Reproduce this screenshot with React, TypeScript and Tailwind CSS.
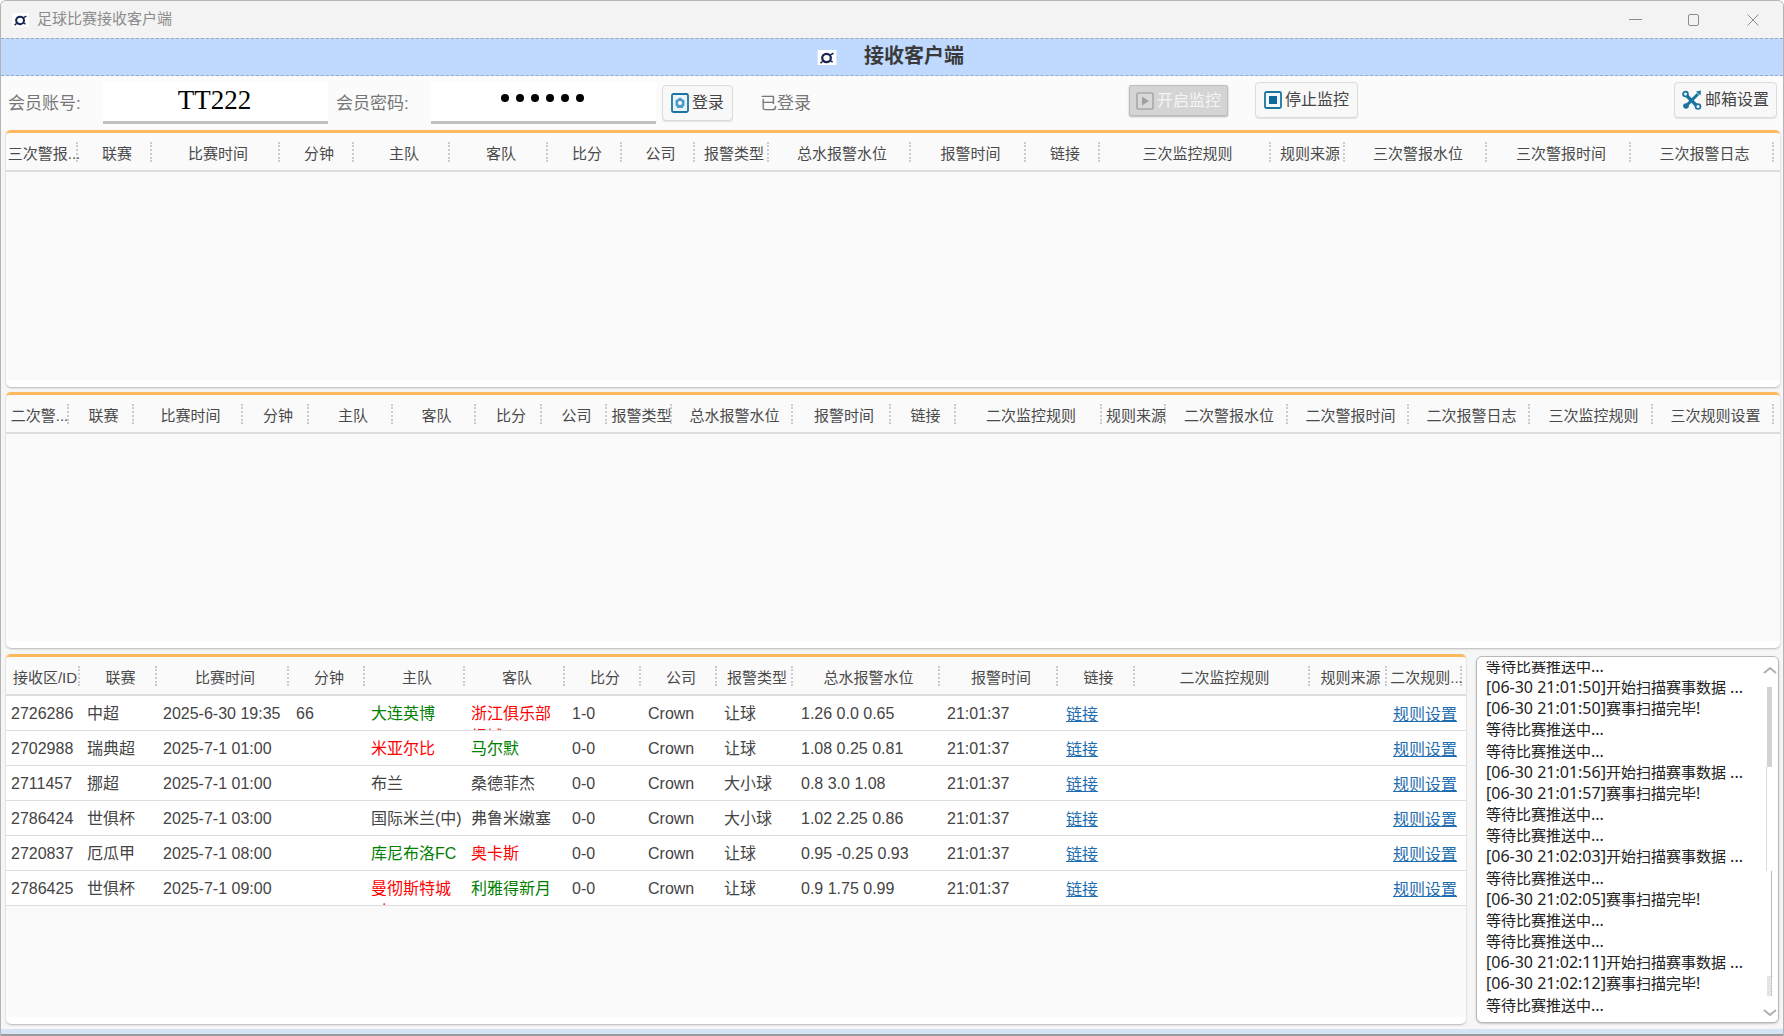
import React from "react";

type Cell = { text: string; color?: string };
type Match = {
  id: string;
  league: string;
  time: string;
  minute: string;
  home: Cell;
  away: Cell;
  score: string;
  type: string;
  water: string;
};

const GREEN = "text-[#008000]";
const RED = "text-[#ff0000]";
const PLAIN = "text-[#444444]";

const firstCols =
  "grid-cols-[72px_74px_128px_74px_96px_98px_74px_73px_74px_142px_115px_74px_171px_74px_142px_144px_143px]";
const secondCols =
  "grid-cols-[63px_65px_109px_66px_84px_83px_66px_65px_65px_121px_98px_65px_146px_64px_122px_121px_121px_123px_121px]";
const thirdCols =
  "grid-cols-[74px_77px_132px_76px_100px_100px_76px_76px_76px_147px_118px_77px_175px_77px_75px]";

const firstHead = ["三次警报...", "联赛", "比赛时间", "分钟", "主队", "客队", "比分", "公司", "报警类型", "总水报警水位", "报警时间", "链接", "三次监控规则", "规则来源", "三次警报水位", "三次警报时间", "三次报警日志"];
const secondHead = ["二次警...", "联赛", "比赛时间", "分钟", "主队", "客队", "比分", "公司", "报警类型", "总水报警水位", "报警时间", "链接", "二次监控规则", "规则来源", "二次警报水位", "二次警报时间", "二次报警日志", "三次监控规则", "三次规则设置"];
const thirdHead = ["接收区/ID", "联赛", "比赛时间", "分钟", "主队", "客队", "比分", "公司", "报警类型", "总水报警水位", "报警时间", "链接", "二次监控规则", "规则来源", "二次规则..."];

const matches: Match[] = [
  { id: "2726286", league: "中超", time: "2025-6-30 19:35", minute: "66", home: { text: "大连英博", color: GREEN }, away: { text: "浙江俱乐部绿城", color: RED }, score: "1-0", type: "让球", water: "1.26 0.0 0.65" },
  { id: "2702988", league: "瑞典超", time: "2025-7-1 01:00", minute: "", home: { text: "米亚尔比", color: RED }, away: { text: "马尔默", color: GREEN }, score: "0-0", type: "让球", water: "1.08 0.25 0.81" },
  { id: "2711457", league: "挪超", time: "2025-7-1 01:00", minute: "", home: { text: "布兰" }, away: { text: "桑德菲杰" }, score: "0-0", type: "大小球", water: "0.8 3.0 1.08" },
  { id: "2786424", league: "世俱杯", time: "2025-7-1 03:00", minute: "", home: { text: "国际米兰(中)" }, away: { text: "弗鲁米嫩塞" }, score: "0-0", type: "大小球", water: "1.02 2.25 0.86" },
  { id: "2720837", league: "厄瓜甲", time: "2025-7-1 08:00", minute: "", home: { text: "库尼布洛FC", color: GREEN }, away: { text: "奥卡斯", color: RED }, score: "0-0", type: "让球", water: "0.95 -0.25 0.93" },
  { id: "2786425", league: "世俱杯", time: "2025-7-1 09:00", minute: "", home: { text: "曼彻斯特城(中)", color: RED }, away: { text: "利雅得新月", color: GREEN }, score: "0-0", type: "让球", water: "0.9 1.75 0.99" },
];

const logLines = [
  "等待比赛推送中...",
  "[06-30 21:01:50]开始扫描赛事数据 ...",
  "[06-30 21:01:50]赛事扫描完毕!",
  "等待比赛推送中...",
  "等待比赛推送中...",
  "[06-30 21:01:56]开始扫描赛事数据 ...",
  "[06-30 21:01:57]赛事扫描完毕!",
  "等待比赛推送中...",
  "等待比赛推送中...",
  "[06-30 21:02:03]开始扫描赛事数据 ...",
  "等待比赛推送中...",
  "[06-30 21:02:05]赛事扫描完毕!",
  "等待比赛推送中...",
  "等待比赛推送中...",
  "[06-30 21:02:11]开始扫描赛事数据 ...",
  "[06-30 21:02:12]赛事扫描完毕!",
  "等待比赛推送中...",
];

const Logo = () => (
  <svg viewBox="0 0 20 16" className="h-full w-full">
    <rect width="20" height="16" fill="#fff" />
    <ellipse cx="9.5" cy="8.5" rx="4.6" ry="4.4" fill="none" stroke="#14264f" strokeWidth="2.4" />
    <path d="M5.5 12 L3 14 M13 5.5 L17 3.5 M13 11 L16 13" stroke="#14264f" strokeWidth="1.6" fill="none" />
  </svg>
);

const LoginIcon = () => (
  <svg viewBox="0 0 18 20" className="h-[20px] w-[18px] shrink-0">
    <rect x="1" y="1" width="16" height="18" rx="1.5" fill="#eaf3f8" stroke="#1a74a0" strokeWidth="1.8" />
    <path d="M9 4.5 L13.5 7.5 V12 L11.5 15 H6.5 L4.5 12 V7.5 Z" fill="#4a9cc6" />
    <circle cx="9" cy="10" r="2" fill="#fff" />
  </svg>
);

const PlayIcon = () => (
  <svg viewBox="0 0 18 18" className="h-[18px] w-[18px] shrink-0">
    <rect x="1" y="1" width="16" height="16" rx="1.5" fill="#d8d8d8" stroke="#a8a8a8" strokeWidth="1.6" />
    <path d="M6 4.5 L13 9 L6 13.5 Z" fill="#a0a0a0" />
  </svg>
);

const StopIcon = () => (
  <svg viewBox="0 0 18 18" className="h-[18px] w-[18px] shrink-0">
    <rect x="1" y="1" width="16" height="16" rx="1.5" fill="#f4f8fb" stroke="#1a74a0" strokeWidth="1.8" />
    <rect x="5" y="5" width="8" height="8" fill="#0a6a9c" />
  </svg>
);

const ToolsIcon = () => (
  <svg viewBox="0 0 20 20" className="h-[20px] w-[20px] shrink-0">
    <path d="M4 5 L15 16" stroke="#1a74a0" strokeWidth="3.4" fill="none" />
    <path d="M16 4 L5 15" stroke="#1a74a0" strokeWidth="3" fill="none" />
    <circle cx="3.5" cy="4" r="2.4" fill="#fff" stroke="#1a74a0" strokeWidth="1.8" />
    <circle cx="16" cy="16.5" r="2.4" fill="#fff" stroke="#1a74a0" strokeWidth="1.8" />
    <path d="M14 1.5 L19 0.5 L18.5 5.5 Z" fill="#1a74a0" />
    <circle cx="4" cy="16" r="2.8" fill="#1a74a0" />
  </svg>
);

const HeaderRow = ({ cols, head }: { cols: string; head: string[] }) => (
  <div className={`grid h-[39px] shrink-0 items-center border-b-2 border-[#dddddd] bg-[#fafafa] ${cols}`}>
    {head.map((h, i) => (
      <div
        key={i}
        className="flex h-[20px] items-center justify-center whitespace-nowrap border-r-2 border-dotted border-[#cccccc] pl-[6px] pt-[6px] text-[15px] text-[#4a4a4a]"
      >
        {h}
      </div>
    ))}
  </div>
);

const Panel = ({ className, children }: { className: string; children: React.ReactNode }) => (
  <div className={`flex flex-col overflow-hidden rounded-[5px] border-t-[3px] border-[#ffb85c] bg-white shadow-[0_1px_2px_rgba(0,0,0,0.25)] ${className}`}>
    {children}
  </div>
);

const EmptyTable = ({ cols, head, className }: { cols: string; head: string[]; className: string }) => (
  <Panel className={className}>
    <HeaderRow cols={cols} head={head} />
    <div className="mb-[7px] flex-1 bg-[#fafafa]" />
  </Panel>
);

const Td = ({ className = "pl-[7px]", color = PLAIN, children }: { className?: string; color?: string; children?: React.ReactNode }) => (
  <div className={`h-[34px] overflow-hidden pt-[6px] text-[16px] leading-[23px] ${className} ${color}`}>
    {children}
  </div>
);

const MatchRow = ({ m }: { m: Match }) => (
  <div className={`grid h-[35px] border-b border-[#dddddd] bg-white ${thirdCols}`}>
    <Td className="pl-[5px]">{m.id}</Td>
    <Td>{m.league}</Td>
    <Td className="pl-[6px]">{m.time}</Td>
    <Td>{m.minute}</Td>
    <Td className="pl-[6px]" color={m.home.color}>{m.home.text}</Td>
    <Td className="pl-[6px]" color={m.away.color}>{m.away.text}</Td>
    <Td>{m.score}</Td>
    <Td>Crown</Td>
    <Td>{m.type}</Td>
    <Td className="pl-[8px]">{m.water}</Td>
    <Td>21:01:37</Td>
    <Td className="pl-[8px]"><span className="relative top-[1px] text-[#1d6db0] underline">链接</span></Td>
    <Td />
    <Td />
    <Td className="whitespace-nowrap pl-[6px]"><span className="relative top-[1px] text-[#1d6db0] underline">规则设置</span></Td>
  </div>
);

const ToolButton = ({ className, children }: { className: string; children: React.ReactNode }) => (
  <div className={`flex shrink-0 items-center justify-center gap-[3px] text-[16px] ${className}`}>{children}</div>
);

// latin runs in the log are a size larger than the chinese text
const LogLine = ({ line }: { line: string }) => (
  <div className="h-[21.17px] whitespace-nowrap font-['Noto_Sans','Noto_Sans_CJK_SC',sans-serif] text-[15px] leading-[21px] text-[#222222]">
    {line.split(/([\x00-\x7f]+)/).map((part, i) =>
      i % 2 ? <span key={i} className="text-[16px]">{part}</span> : part
    )}
  </div>
);

const LogPanel = () => (
  <div className="relative mt-[2px] h-[367px] w-[303px] shrink-0 overflow-hidden rounded-[6px] border border-[#b8b8b8] bg-white shadow-[0_1px_2px_rgba(0,0,0,0.2)]">
    <div className="mt-[4px] h-[358px] overflow-hidden pl-[9px]">
      <div className="-mt-[5px]">
        {logLines.map((line, i) => (
          <LogLine key={i} line={line} />
        ))}
      </div>
    </div>
    <div className="absolute right-0 top-0 h-full w-[16px] bg-white">
      <svg viewBox="0 0 14 8" className="absolute left-[1px] top-[9px] w-[14px]">
        <path d="M1 7 L7 2 L13 7" fill="none" stroke="#b0b0b0" strokeWidth="2" />
      </svg>
      <svg viewBox="0 0 14 8" className="absolute bottom-[5px] left-[1px] w-[14px]">
        <path d="M1 1 L7 6 L13 1" fill="none" stroke="#b0b0b0" strokeWidth="2" />
      </svg>
      <div className="absolute left-[5px] top-[30px] h-[80px] w-[5px] bg-[#d2d2d2]" />
      <div className="absolute left-[4px] top-[110px] h-[104px] w-[1px] bg-[#dcdcdc]" />
      <div className="absolute left-[9px] top-[214px] h-[105px] w-[1px] bg-[#b8b8b8]" />
      <div className="absolute left-[5px] top-[319px] h-[20px] w-[5px] border-r border-dotted border-[#b0b0b0] bg-[#e4e4e4]" />
    </div>
  </div>
);

export default function App() {
  return (
    <div className="flex h-[1036px] w-[1784px] flex-col overflow-hidden rounded-t-[6px] border-l border-r border-t border-[#b4b4b4] bg-[#f6f6f6] font-['Liberation_Sans','Noto_Sans_CJK_SC',sans-serif]">
      {/* title bar */}
      <div className="flex h-[37px] shrink-0 items-center bg-[#f3f3f3]">
        <div className="ml-[11px] h-[14px] w-[17px]"><Logo /></div>
        <span className="ml-[8px] text-[15px] text-[#8c8c8c]">足球比赛接收客户端</span>
        <div className="ml-auto flex items-center">
          <div className="h-[1px] w-[13px] bg-[#8c8c8c]" />
          <div className="ml-[46px] h-[12px] w-[11px] rounded-[2px] border border-[#8c8c8c]" />
          <svg viewBox="0 0 12 12" className="ml-[48px] mr-[24px] h-[12px] w-[12px]">
            <path d="M0.5 0.5 L11.5 11.5 M11.5 0.5 L0.5 11.5" stroke="#8c8c8c" strokeWidth="1" />
          </svg>
        </div>
      </div>

      {/* banner */}
      <div className="flex h-[38px] shrink-0 items-center border-b border-t border-dashed border-[#9aa8c0] bg-[#bfd9ff]">
        <div className="ml-[816px] h-[15px] w-[20px]"><Logo /></div>
        <span className="ml-[27px] pb-[2px] text-[20px] font-bold text-[#3a3a3a]">接收客户端</span>
      </div>

      {/* toolbar */}
      <div className="flex h-[54px] shrink-0 items-center bg-[#fbfbfb] text-[#777777]">
        <span className="ml-[7px] w-[95px] pt-[2px] text-[17px]">会员账号:</span>
        <div className="flex h-[42px] w-[225px] shrink-0 items-center justify-center border-b-[3px] border-[#c0c0c0] bg-white pb-[2px] pr-[2px] font-['Liberation_Serif',serif] text-[27px] text-black">
          TT222
        </div>
        <span className="ml-[8px] w-[95px] pt-[2px] text-[17px]">会员密码:</span>
        <div className="flex h-[42px] w-[225px] shrink-0 items-center justify-center gap-[7px] border-b-[3px] border-[#c0c0c0] bg-white pb-[7px] pr-[2px]">
          {[0, 1, 2, 3, 4, 5].map((d) => (
            <span key={d} className="h-[8px] w-[8px] rounded-full bg-black" />
          ))}
        </div>
        <ToolButton className="ml-[6px] h-[36px] w-[71px] rounded-[4px] border border-[#dcdcdc] bg-[#f8f8f8] text-[#444444] shadow-[0_1px_1px_rgba(0,0,0,0.1)]">
          <LoginIcon />
          登录
        </ToolButton>
        <span className="ml-[27px] pt-[2px] text-[17px]">已登录</span>
        <div className="flex-1" />
        <ToolButton className="mb-[5px] h-[31px] w-[99px] rounded-[2px] border border-[#bdbdbd] bg-[#d4d4d4] text-[#f4f4f4] shadow-[0_1px_2px_rgba(0,0,0,0.3)]">
          <PlayIcon />
          开启监控
        </ToolButton>
        <ToolButton className="mb-[6px] ml-[27px] h-[36px] w-[103px] rounded-[4px] border border-[#dcdcdc] bg-[#f8f8f8] text-[#444444] shadow-[0_1px_1px_rgba(0,0,0,0.1)]">
          <StopIcon />
          停止监控
        </ToolButton>
        <ToolButton className="mb-[6px] ml-[316px] mr-[6px] h-[36px] w-[103px] rounded-[4px] border border-[#dcdcdc] bg-[#f8f8f8] text-[#444444] shadow-[0_1px_1px_rgba(0,0,0,0.1)]">
          <ToolsIcon />
          邮箱设置
        </ToolButton>
      </div>

      <EmptyTable cols={firstCols} head={firstHead} className="ml-[5px] h-[257px] w-[1774px] shrink-0" />
      <EmptyTable cols={secondCols} head={secondHead} className="ml-[5px] mt-[5px] h-[256px] w-[1774px] shrink-0" />

      <div className="ml-[5px] mt-[6px] flex h-[370px] shrink-0 gap-[10px]">
        <Panel className="h-[370px] w-[1460px] shrink-0">
          <HeaderRow cols={thirdCols} head={thirdHead} />
          {matches.map((m) => (
            <MatchRow key={m.id} m={m} />
          ))}
          <div className="mb-[7px] flex-1 bg-[#fafafa]" />
        </Panel>
        <LogPanel />
      </div>

      {/* window foot */}
      <div className="mt-[5px] h-[5px] shrink-0 bg-[#d5e4f5]" />
      <div className="h-[3px] shrink-0 bg-[#9a9a9a]" />
    </div>
  );
}
